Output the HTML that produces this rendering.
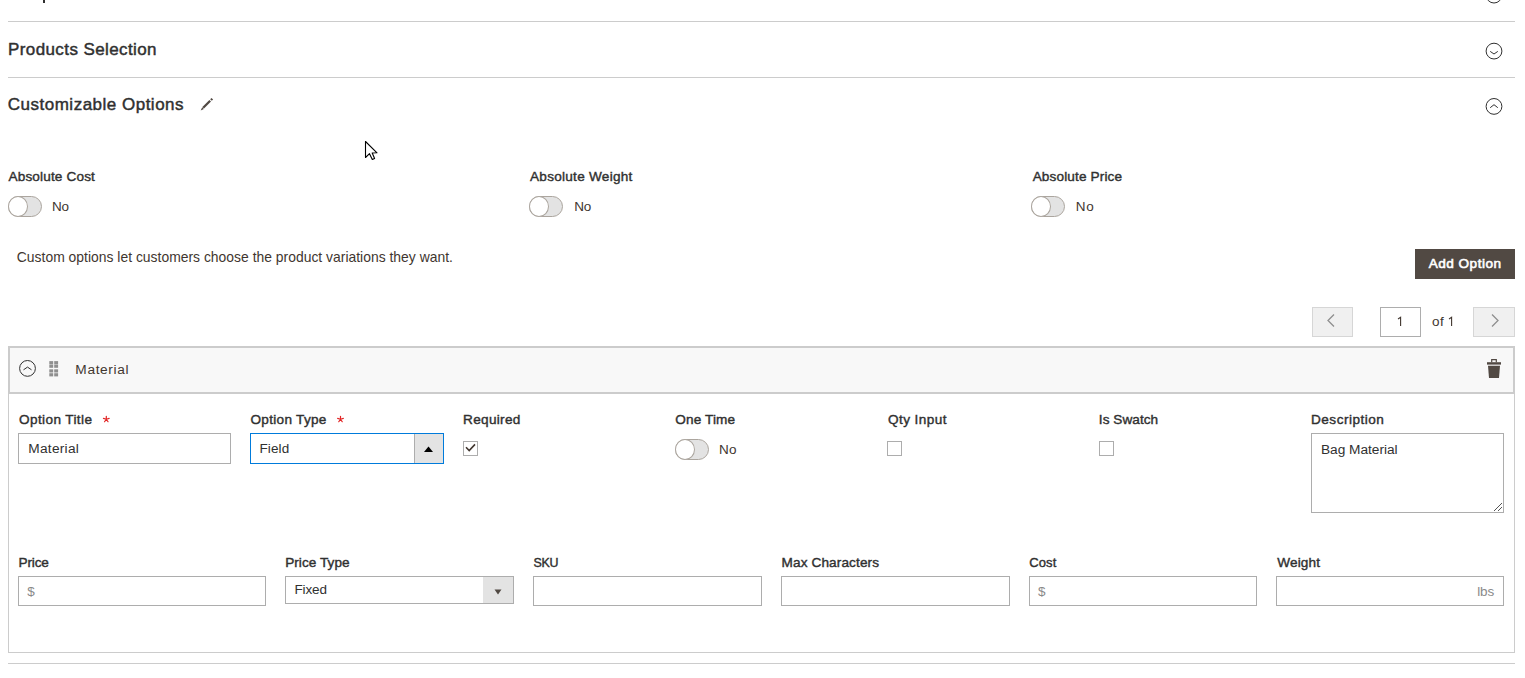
<!DOCTYPE html>
<html><head><meta charset="utf-8"><title>Customizable Options</title>
<style>
html,body{margin:0;padding:0;background:#fff;width:1525px;height:678px;overflow:hidden;position:relative}
body{font-family:"Liberation Sans",sans-serif}
.t{position:absolute;white-space:nowrap;font-family:"Liberation Sans",sans-serif;font-weight:400}
</style></head><body>
<div style="position:absolute;left:43px;top:0px;width:2px;height:3px;box-sizing:border-box;background:#303030"></div>
<div style="position:absolute;left:8px;top:21px;width:1507px;height:1px;box-sizing:border-box;background:#cccccc"></div>
<div style="position:absolute;left:8px;top:77px;width:1507px;height:1px;box-sizing:border-box;background:#cccccc"></div>
<div style="position:absolute;left:8px;top:663px;width:1507px;height:1px;box-sizing:border-box;background:#cccccc"></div>
<svg style="position:absolute;left:0;top:0" width="1525" height="678" viewBox="0 0 1525 678"><circle cx="1494" cy="-4.9" r="7.9" fill="none" stroke="#303030" stroke-width="1"/><path d="M1490.2 -4.6 L1494 -2.0 L1497.8 -4.6" fill="none" stroke="#303030" stroke-width="1"/><circle cx="1494" cy="51.1" r="7.9" fill="none" stroke="#303030" stroke-width="1"/><path d="M1490.2 51.400000000000006 L1494 54.00000000000001 L1497.8 51.400000000000006" fill="none" stroke="#303030" stroke-width="1"/><circle cx="1494" cy="106.4" r="7.9" fill="none" stroke="#303030" stroke-width="1"/><path d="M1490.2 107.7 L1494 104.7 L1497.8 107.7" fill="none" stroke="#303030" stroke-width="1"/></svg>
<svg style="position:absolute;left:0;top:0" width="1525" height="678" viewBox="0 0 1525 678"><path d="M200.7 110.5 L202.2 107.2 L203.9 108.9 Z" fill="#514943"/><path d="M202.4 107.0 L209.4 100.0 L211 101.6 L204 108.6 Z" fill="#514943"/><path d="M210.2 99.2 L211.5 97.9 L213.1 99.5 L211.8 100.8 Z" fill="#514943"/></svg>
<svg style="position:absolute;left:0;top:0" width="1525" height="678" viewBox="0 0 1525 678"><path d="M365.5 141.5 L365.5 157.5 L369.5 153.7 L372.3 159.5 L374.6 158.5 L372.2 153 L377 152.8 Z" fill="#fff" stroke="#000" stroke-width="1.1" stroke-linejoin="round"/></svg>
<div style="position:absolute;left:8px;top:196px;width:34px;height:21px;box-sizing:border-box;border:1px solid #aba59e;border-radius:11px;background:#e3e3e3"></div>
<div style="position:absolute;left:8px;top:196px;width:20px;height:21px;box-sizing:border-box;border:1px solid #aba59e;border-radius:50%;background:#fff"></div>
<div style="position:absolute;left:529px;top:196px;width:34px;height:21px;box-sizing:border-box;border:1px solid #aba59e;border-radius:11px;background:#e3e3e3"></div>
<div style="position:absolute;left:529px;top:196px;width:20px;height:21px;box-sizing:border-box;border:1px solid #aba59e;border-radius:50%;background:#fff"></div>
<div style="position:absolute;left:1031px;top:196px;width:34px;height:21px;box-sizing:border-box;border:1px solid #aba59e;border-radius:11px;background:#e3e3e3"></div>
<div style="position:absolute;left:1031px;top:196px;width:20px;height:21px;box-sizing:border-box;border:1px solid #aba59e;border-radius:50%;background:#fff"></div>
<div style="position:absolute;left:1415px;top:249px;width:100px;height:30px;box-sizing:border-box;background:#514943"></div>
<div style="position:absolute;left:1312px;top:307px;width:41px;height:30px;box-sizing:border-box;background:#f0f0f0;border:1px solid #d6d6d6"></div>
<div style="position:absolute;left:1473px;top:307px;width:42px;height:30px;box-sizing:border-box;background:#f0f0f0;border:1px solid #d6d6d6"></div>
<div style="position:absolute;left:1380px;top:307px;width:41px;height:30px;box-sizing:border-box;background:#fff;border:1px solid #adadad"></div>
<svg style="position:absolute;left:0;top:0" width="1525" height="678" viewBox="0 0 1525 678"><path d="M1334 314.5 L1328 320.5 L1334 326.5" fill="none" stroke="#8f8f8f" stroke-width="1.3"/><path d="M1492 314.5 L1498 320.5 L1492 326.5" fill="none" stroke="#8f8f8f" stroke-width="1.3"/></svg>
<svg style="position:absolute;left:0;top:0" width="1525" height="678" viewBox="0 0 1525 678"><path d="M1398 319 L1400.6 317.3 L1400.6 326" fill="none" stroke="#41362f" stroke-width="1.1"/><path d="M1449 319 L1451.6 317.3 L1451.6 326" fill="none" stroke="#41362f" stroke-width="1.1"/></svg>
<div style="position:absolute;left:8px;top:346px;width:1507px;height:307px;box-sizing:border-box;border:1px solid #cccccc"></div>
<div style="position:absolute;left:9px;top:347px;width:1505px;height:47px;box-sizing:border-box;border:1px solid #cccccc;border-bottom-width:2px;background:#f8f8f8"></div>
<svg style="position:absolute;left:0;top:0" width="1525" height="678" viewBox="0 0 1525 678"><circle cx="27.5" cy="368.4" r="7.9" fill="none" stroke="#303030" stroke-width="1"/><path d="M23.5 369.79999999999995 L27.5 367.09999999999997 L31.5 369.79999999999995" fill="none" stroke="#303030" stroke-width="1"/></svg>
<svg style="position:absolute;left:0;top:0" width="1525" height="678" viewBox="0 0 1525 678"><rect x="49.3" y="361.1" width="3.9" height="3.2" fill="#8f8f8f"/><rect x="49.3" y="364.6" width="3.9" height="3.2" fill="#8f8f8f"/><rect x="49.3" y="369.3" width="3.9" height="3.2" fill="#8f8f8f"/><rect x="49.3" y="373.2" width="3.9" height="3.2" fill="#8f8f8f"/><rect x="54.2" y="361.1" width="3.9" height="3.2" fill="#8f8f8f"/><rect x="54.2" y="364.6" width="3.9" height="3.2" fill="#8f8f8f"/><rect x="54.2" y="369.3" width="3.9" height="3.2" fill="#8f8f8f"/><rect x="54.2" y="373.2" width="3.9" height="3.2" fill="#8f8f8f"/></svg>
<svg style="position:absolute;left:0;top:0" width="1525" height="678" viewBox="0 0 1525 678"><path d="M1491.7 362.3 L1491.7 359.7 L1496.3 359.7 L1496.3 362.3" fill="none" stroke="#514943" stroke-width="1.2"/><path d="M1487 362.2 L1501 362.2 L1501 364.6 L1487 364.6 Z" fill="#514943"/><path d="M1488 365.8 L1500 365.8 L1499 378 L1489 378 Z" fill="#514943"/></svg>
<svg style="position:absolute;left:0;top:0" width="1525" height="678" viewBox="0 0 1525 678"><g fill="#e22626"></g></svg>
<div style="position:absolute;left:18px;top:433px;width:213px;height:31px;box-sizing:border-box;border:1px solid #adadad;background:#fff"></div>
<div style="position:absolute;left:250px;top:433px;width:194px;height:31px;box-sizing:border-box;border:1px solid #007bdb;background:#fff"></div>
<div style="position:absolute;left:414px;top:434px;width:29px;height:29px;box-sizing:border-box;background:#e3e3e3;border-left:1px solid #adadad"></div>
<svg style="position:absolute;left:0;top:0" width="1525" height="678" viewBox="0 0 1525 678"><path d="M424 452 L433 452 L428.5 446.5 Z" fill="#000"/></svg>
<div style="position:absolute;left:463px;top:441px;width:15px;height:15px;box-sizing:border-box;border:1px solid #adadad;background:#fff"></div>
<svg style="position:absolute;left:0;top:0" width="1525" height="678" viewBox="0 0 1525 678"><path d="M466 447.3 L469.2 450.5 L475 444.4" fill="none" stroke="#41362f" stroke-width="1.6"/></svg>
<div style="position:absolute;left:675px;top:439px;width:34px;height:21px;box-sizing:border-box;border:1px solid #aba59e;border-radius:11px;background:#e3e3e3"></div>
<div style="position:absolute;left:675px;top:439px;width:20px;height:21px;box-sizing:border-box;border:1px solid #aba59e;border-radius:50%;background:#fff"></div>
<div style="position:absolute;left:887px;top:441px;width:15px;height:15px;box-sizing:border-box;border:1px solid #adadad;background:#fff"></div>
<div style="position:absolute;left:1099px;top:441px;width:15px;height:15px;box-sizing:border-box;border:1px solid #adadad;background:#fff"></div>
<div style="position:absolute;left:1311px;top:433px;width:193px;height:80px;box-sizing:border-box;border:1px solid #adadad;background:#fff"></div>
<svg style="position:absolute;left:0;top:0" width="1525" height="678" viewBox="0 0 1525 678"><path d="M1494 511 L1502 503 M1498 511 L1502 507" stroke="#555" stroke-width="1"/></svg>
<div style="position:absolute;left:18px;top:576px;width:248px;height:30px;box-sizing:border-box;border:1px solid #adadad;background:#fff"></div>
<div style="position:absolute;left:285px;top:576px;width:229px;height:28px;box-sizing:border-box;border:1px solid #adadad;background:#fff"></div>
<div style="position:absolute;left:483px;top:577px;width:30px;height:26px;box-sizing:border-box;background:#e3e3e3"></div>
<svg style="position:absolute;left:0;top:0" width="1525" height="678" viewBox="0 0 1525 678"><path d="M494.5 589.5 L501.5 589.5 L498 594.5 Z" fill="#514943"/></svg>
<div style="position:absolute;left:533px;top:576px;width:229px;height:30px;box-sizing:border-box;border:1px solid #adadad;background:#fff"></div>
<div style="position:absolute;left:781px;top:576px;width:229px;height:30px;box-sizing:border-box;border:1px solid #adadad;background:#fff"></div>
<div style="position:absolute;left:1029px;top:576px;width:228px;height:30px;box-sizing:border-box;border:1px solid #adadad;background:#fff"></div>
<div style="position:absolute;left:1276px;top:576px;width:228px;height:30px;box-sizing:border-box;border:1px solid #adadad;background:#fff"></div>
<svg style="position:absolute;left:0;top:0" width="1525" height="678" viewBox="0 0 1525 678"><path d="M106.3 419.3 L106.30 416.30 M106.3 419.3 L109.15 418.37 M106.3 419.3 L108.06 421.73 M106.3 419.3 L104.54 421.73 M106.3 419.3 L103.45 418.37 " stroke="#e22626" stroke-width="1.2" stroke-linecap="round" fill="none"/><path d="M340.5 419.3 L340.50 416.30 M340.5 419.3 L343.35 418.37 M340.5 419.3 L342.26 421.73 M340.5 419.3 L338.74 421.73 M340.5 419.3 L337.65 418.37 " stroke="#e22626" stroke-width="1.2" stroke-linecap="round" fill="none"/></svg>
<div class="t" style="left:8.0px;top:41px;font-size:17px;line-height:17px;color:#303030;letter-spacing:0.4px;-webkit-text-stroke:0.45px #303030;">Products Selection</div>
<div class="t" style="left:7.84px;top:96px;font-size:17px;line-height:17px;color:#303030;letter-spacing:0.495px;-webkit-text-stroke:0.45px #303030;">Customizable Options</div>
<div class="t" style="left:8.48px;top:170px;font-size:13.6px;line-height:13.6px;color:#303030;letter-spacing:0.15px;-webkit-text-stroke:0.4px #303030;">Absolute Cost</div>
<div class="t" style="left:530.0px;top:170px;font-size:13.6px;line-height:13.6px;color:#303030;letter-spacing:0.257px;-webkit-text-stroke:0.4px #303030;">Absolute Weight</div>
<div class="t" style="left:1032.64px;top:170px;font-size:13.6px;line-height:13.6px;color:#303030;letter-spacing:0.138px;-webkit-text-stroke:0.4px #303030;">Absolute Price</div>
<div class="t" style="left:52.0px;top:200px;font-size:13.5px;line-height:13.5px;color:#41362f;letter-spacing:-0.2px;">No</div>
<div class="t" style="left:574.16px;top:200px;font-size:13.5px;line-height:13.5px;color:#41362f;letter-spacing:-0.2px;">No</div>
<div class="t" style="left:1075.68px;top:200px;font-size:13.5px;line-height:13.5px;color:#41362f;letter-spacing:0.8px;">No</div>
<div class="t" style="left:16.84px;top:251px;font-size:13.9px;line-height:13.9px;color:#41362f;letter-spacing:0.009px;">Custom options let customers choose the product variations they want.</div>
<div class="t" style="left:1428.64px;top:257px;font-size:13.6px;line-height:13.6px;color:#ffffff;letter-spacing:0.489px;-webkit-text-stroke:0.6px #ffffff;">Add Option</div>
<div class="t" style="left:1432.0px;top:315px;font-size:13.5px;line-height:13.5px;color:#41362f;letter-spacing:0.6px;">of</div>
<div class="t" style="left:75.36px;top:363px;font-size:13.7px;line-height:13.7px;color:#41362f;letter-spacing:0.629px;">Material</div>
<div class="t" style="left:19.0px;top:413px;font-size:13.6px;line-height:13.6px;color:#303030;letter-spacing:0.382px;-webkit-text-stroke:0.4px #303030;">Option Title</div>
<div class="t" style="left:250.52px;top:413px;font-size:13.6px;line-height:13.6px;color:#303030;letter-spacing:0.28px;-webkit-text-stroke:0.4px #303030;">Option Type</div>
<div class="t" style="left:463.04px;top:413px;font-size:13.6px;line-height:13.6px;color:#303030;letter-spacing:0.314px;-webkit-text-stroke:0.4px #303030;">Required</div>
<div class="t" style="left:675.36px;top:413px;font-size:13.6px;line-height:13.6px;color:#303030;letter-spacing:0.114px;-webkit-text-stroke:0.4px #303030;">One Time</div>
<div class="t" style="left:888.0px;top:413px;font-size:13.6px;line-height:13.6px;color:#303030;letter-spacing:0.425px;-webkit-text-stroke:0.4px #303030;">Qty Input</div>
<div class="t" style="left:1098.84px;top:413px;font-size:13.6px;line-height:13.6px;color:#303030;letter-spacing:0.05px;-webkit-text-stroke:0.4px #303030;">Is Swatch</div>
<div class="t" style="left:1311.04px;top:413px;font-size:13.6px;line-height:13.6px;color:#303030;letter-spacing:0.48px;-webkit-text-stroke:0.4px #303030;">Description</div>
<div class="t" style="left:28.32px;top:442px;font-size:13.7px;line-height:13.7px;color:#303030;letter-spacing:0.257px;">Material</div>
<div class="t" style="left:259.52px;top:442px;font-size:13.5px;line-height:13.5px;color:#303030;letter-spacing:0.1px;">Field</div>
<div class="t" style="left:718.88px;top:443px;font-size:13.5px;line-height:13.5px;color:#41362f;letter-spacing:0.4px;">No</div>
<div class="t" style="left:1321.0px;top:443px;font-size:13.7px;line-height:13.7px;color:#303030;letter-spacing:-0.018px;">Bag Material</div>
<div class="t" style="left:18.52px;top:556px;font-size:13.6px;line-height:13.6px;color:#303030;letter-spacing:-0.15px;-webkit-text-stroke:0.4px #303030;">Price</div>
<div class="t" style="left:285.2px;top:556px;font-size:13.6px;line-height:13.6px;color:#303030;letter-spacing:0.044px;-webkit-text-stroke:0.4px #303030;">Price Type</div>
<div class="t" style="left:533.52px;top:557px;font-size:12.4px;line-height:12.4px;color:#303030;letter-spacing:-0.3px;-webkit-text-stroke:0.4px #303030;">SKU</div>
<div class="t" style="left:781.52px;top:556px;font-size:13.6px;line-height:13.6px;color:#303030;letter-spacing:0.123px;-webkit-text-stroke:0.4px #303030;">Max Characters</div>
<div class="t" style="left:1029.16px;top:556px;font-size:13px;line-height:13px;color:#303030;letter-spacing:0.133px;-webkit-text-stroke:0.4px #303030;">Cost</div>
<div class="t" style="left:1277.28px;top:556px;font-size:13.6px;line-height:13.6px;color:#303030;letter-spacing:0.12px;-webkit-text-stroke:0.4px #303030;">Weight</div>
<div class="t" style="left:294.52px;top:583px;font-size:13.5px;line-height:13.5px;color:#303030;letter-spacing:-0.15px;">Fixed</div>
<div class="t" style="left:27.16px;top:585px;font-size:13.5px;line-height:13.5px;color:#8a8a8a;letter-spacing:0.0px;">$</div>
<div class="t" style="left:1038.0px;top:585px;font-size:13.5px;line-height:13.5px;color:#8a8a8a;letter-spacing:0.0px;">$</div>
<div class="t" style="left:1477.16px;top:585px;font-size:13.5px;line-height:13.5px;color:#8a8a8a;letter-spacing:-0.1px;">lbs</div>
</body></html>
